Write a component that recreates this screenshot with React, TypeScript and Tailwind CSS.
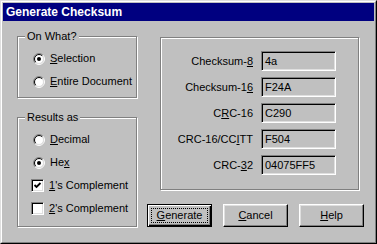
import React from 'react';

function U({ children }: { children: React.ReactNode }) {
    return <span className="underline underline-offset-[1px] decoration-1">{children}</span>;
}

function Radio({ checked }: { checked?: boolean }) {
    const a = (r: number) => {
        const d = r * 0.7071;
        return { x1: 6 - d, y1: 6 + d, x2: 6 + d, y2: 6 - d };
    };
    const o = a(5.5);
    const i = a(4.5);
    return (
        <svg width="12" height="12" viewBox="0 0 12 12" className="shrink-0">
            <circle cx="6" cy="6" r="4.5" fill="#fff" />
            <path d={`M${o.x1} ${o.y1} A5.5 5.5 0 0 1 ${o.x2} ${o.y2}`} stroke="#808080" fill="none" />
            <path d={`M${o.x2} ${o.y2} A5.5 5.5 0 0 1 ${o.x1} ${o.y1}`} stroke="#fff" fill="none" />
            <path d={`M${i.x1} ${i.y1} A4.5 4.5 0 0 1 ${i.x2} ${i.y2}`} stroke="#000" fill="none" />
            <path d={`M${i.x2} ${i.y2} A4.5 4.5 0 0 1 ${i.x1} ${i.y1}`} stroke="#dfdfdf" fill="none" />
            {checked && <circle cx="6" cy="6" r="2" fill="#000" />}
        </svg>
    );
}

function Check({ checked }: { checked?: boolean }) {
    return (
        <div className="w-[13px] h-[13px] shrink-0 bg-white border border-t-[#808080] border-l-[#808080] border-b-white border-r-white shadow-[inset_1px_1px_0_#000,inset_-1px_-1px_0_#dfdfdf] flex items-center justify-center">
            {checked && (
                <svg width="9" height="9" viewBox="0 0 9 9">
                    <polyline points="1.5,4 3.5,6 7.5,2" stroke="#000" strokeWidth="1.8" fill="none" />
                </svg>
            )}
        </div>
    );
}

function Group({ label, className, children }: { label: string; className: string; children: React.ReactNode }) {
    return (
        <div className={"relative border border-[#808080] shadow-[1px_1px_0_#fff,inset_1px_1px_0_#fff] " + className}>
            <span className="absolute -top-[7px] left-[7px] px-[2px] bg-[#c0c0c0] leading-[13px]">{label}</span>
            {children}
        </div>
    );
}

function Field({ label, value }: { label: React.ReactNode; value: string }) {
    return (
        <div className="flex items-center h-[20px]">
            <div className="w-[92px] text-right">{label}</div>
            <div className="ml-[8px] w-[75px] h-[20px] border border-t-[#808080] border-l-[#808080] border-b-white border-r-white shadow-[inset_1px_1px_0_#000,inset_-1px_-1px_0_#dfdfdf] pl-[3px] flex items-center">
                {value}
            </div>
        </div>
    );
}

function Button({ children, def }: { children: React.ReactNode; def?: boolean }) {
    if (def) {
        return (
            <div className="w-[65px] h-[23px] border border-black shadow-[inset_1px_1px_0_#fff,inset_-1px_-1px_0_#000,inset_-2px_-2px_0_#808080] p-[3px]">
                <div className="w-full h-full border border-dotted border-black flex items-center justify-center">{children}</div>
            </div>
        );
    }
    return (
        <div className="w-[65px] h-[23px] border border-t-white border-l-white border-b-black border-r-black shadow-[inset_-1px_-1px_0_#808080,inset_1px_1px_0_#dfdfdf] flex items-center justify-center">
            {children}
        </div>
    );
}

export default function App() {
    return (
        <div className="w-[377px] h-[244px] bg-[#c0c0c0] border border-t-[#dfdfdf] border-l-[#dfdfdf] border-b-black border-r-black font-['Liberation_Sans',Arial,sans-serif] text-[11px] text-black">
            <div className="h-full border border-t-white border-l-white border-b-[#808080] border-r-[#808080] p-[1px] flex flex-col">
                <div className="h-[18px] bg-[#000080] text-white font-bold text-[12px] pl-[3px] flex items-center">
                    Generate Checksum
                </div>
                <div className="flex pl-[14px]">
                    <div className="w-[120px] pt-[15px] flex flex-col">
                        <Group label="On What?" className="h-[62px] pt-[10px] pl-[15px]">
                            <div className="flex items-center h-[23px] gap-[5px]"><Radio checked /><span><U>S</U>election</span></div>
                            <div className="flex items-center h-[23px] gap-[5px]"><Radio /><span><U>E</U>ntire Document</span></div>
                        </Group>
                        <Group label="Results as" className="mt-[19px] h-[110px] pt-[10px] pl-[15px]">
                            <div className="flex items-center h-[23px] gap-[5px]"><Radio /><span><U>D</U>ecimal</span></div>
                            <div className="flex items-center h-[23px] gap-[5px]"><Radio checked /><span>He<U>x</U></span></div>
                            <div className="flex items-center h-[23px] gap-[5px] -ml-[2px]"><Check checked /><span><U>1</U>'s Complement</span></div>
                            <div className="flex items-center h-[23px] gap-[5px] -ml-[2px]"><Check /><span><U>2</U>'s Complement</span></div>
                        </Group>
                    </div>
                    <div className="ml-[10px] w-[218px] flex flex-col">
                        <div className="ml-[13px] mt-[16px] w-[199px] h-[153px] border border-[#808080] shadow-[1px_1px_0_#fff,inset_1px_1px_0_#fff] pt-[13px] flex flex-col gap-[6px]">
                            <Field label={<>Checksum-<U>8</U></>} value="4a" />
                            <Field label={<>Checksum-1<U>6</U></>} value="F24A" />
                            <Field label={<>C<U>R</U>C-16</>} value="C290" />
                            <Field label={<>CRC-16/CC<U>I</U>TT</>} value="F504" />
                            <Field label={<>CRC-<U>3</U>2</>} value="04075FF5" />
                        </div>
                        <div className="mt-[14px] flex gap-[11px]">
                            <Button def><span><U>G</U>enerate</span></Button>
                            <Button><span><U>C</U>ancel</span></Button>
                            <Button><span><U>H</U>elp</span></Button>
                        </div>
                    </div>
                </div>
            </div>
        </div>
    );
}
